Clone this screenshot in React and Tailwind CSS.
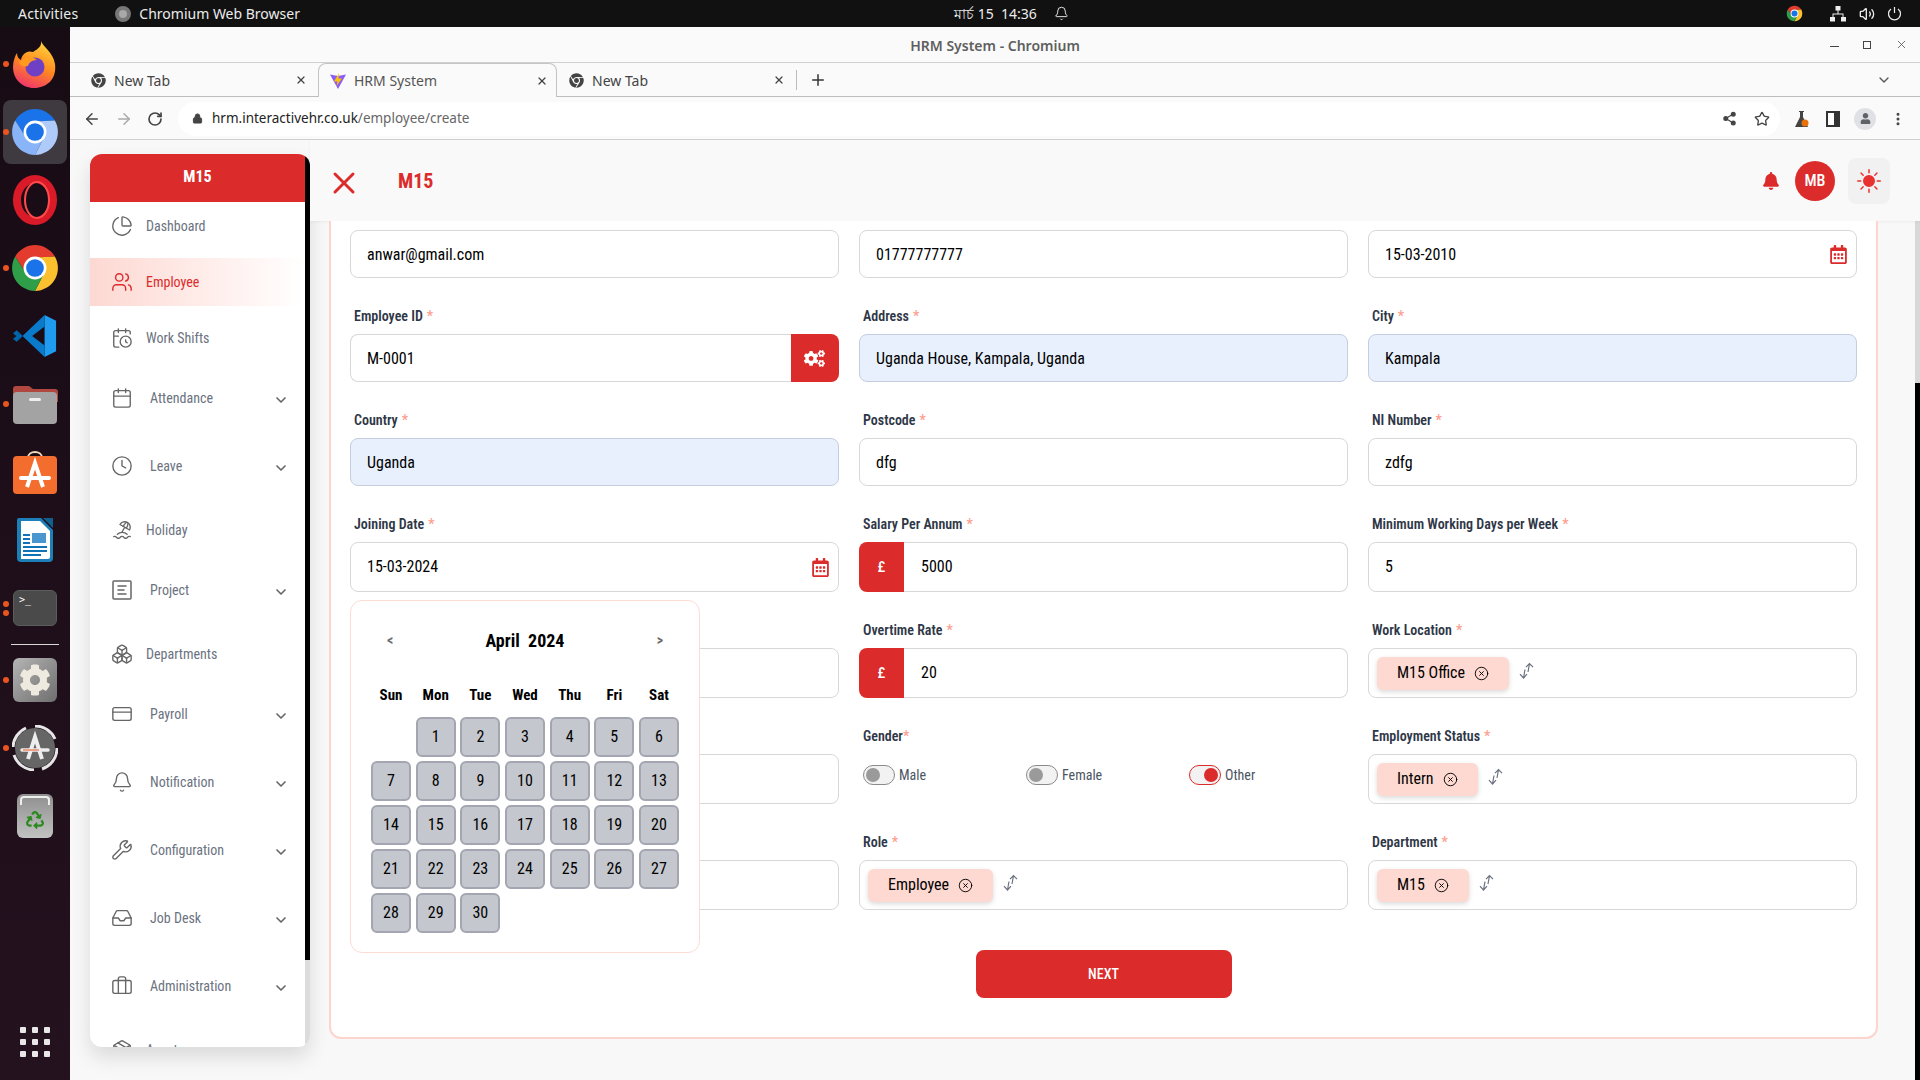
import {
  ArrowLeft, ArrowRight, Bell, Boxes, Briefcase, Calendar, CalendarClock, ChartPie, ChevronDown, CircleX,
  Clock, CreditCard, Inbox, Lock, MoreVertical, Package, Plus, RotateCw, Share2, Star, Users, Volume2, Wrench, X,
} from "lucide-react";
import { FaBell, FaChrome, FaCog, FaCogs, FaRecycle, FaRegCalendarAlt, FaUser } from "react-icons/fa";
import { BsSunFill } from "react-icons/bs";
import { TbBeach } from "react-icons/tb";

const chromeFont = "font-[family-name:'Noto_Sans',sans-serif]";

function ChromeMark({ size = 48, top, right, left, hub }) {
  return (
    <svg width={size} height={size} viewBox="0 0 48 48">
      <path d="M24 24L24 14L43.05 13A22 22 0 0 0 4.95 13L15.3 29Z" fill={top} />
      <path d="M24 24L32.7 29L24 46A22 22 0 0 0 43.05 13L24 14Z" fill={right} />
      <path d="M24 24L15.3 29L4.95 13A22 22 0 0 0 24 46L32.7 29Z" fill={left} />
      <circle cx="24" cy="24" r="11" fill="#fff" />
      <circle cx="24" cy="24" r="8.5" fill={hub} />
    </svg>
  );
}

function ProjectIcon() {
  return (
    <svg width="22" height="22" viewBox="0 0 22 22" fill="none" stroke="currentColor" strokeWidth="1.5" strokeLinecap="round">
      <rect x="2" y="2" width="18" height="18" rx="1" />
      <path d="M7 7h8M7 11h6M7 15h8" />
    </svg>
  );
}

function SortIcon() {
  return (
    <svg width="18" height="18" viewBox="0 0 18 18" fill="none" stroke="#6b7280" strokeWidth="1.2" className="ml-[10px] mb-[5px]">
      <path d="M7 5.200L10.500 1.500L14 5.200M10.500 1.500L9 10" />
      <path d="M1 12.200L4.500 16L8 12.200M4.500 16L6 7.500" />
    </svg>
  );
}

const dockIcons = [
  {
    dot: 1,
    icon: (
      <svg width="48" height="50" viewBox="0 0 48 50">
        <defs>
          <linearGradient id="ff" x1="0.7" y1="0" x2="0.3" y2="1">
            <stop offset="0" stopColor="#ffd53d" />
            <stop offset="0.5" stopColor="#ff8a1f" />
            <stop offset="1" stopColor="#f0336e" />
          </linearGradient>
        </defs>
        <path d="M30 2C32 8 42 13 44 25C46 40 36 49 23 49C11 49 2 40 2 28C2 22 4 17 6 14C6 18 8 20 10 21C11 15 16 11 22 13C27 10 31 7 30 2Z" fill="url(#ff)" />
        <circle cx="24" cy="28" r="9.5" fill="#6f3fc4" />
        <path d="M8 24C13 17 21 17 26 21C22 21 18 23 17 27C13 28 10 27 8 24Z" fill="#ff9a1f" />
      </svg>
    ),
  },
  { dot: 1, active: true, icon: <ChromeMark size={50} top="#1a73e8" right="#aecbfa" left="#8ab4f8" hub="#1a73e8" /> },
  {
    icon: (
      <svg width="46" height="50" viewBox="0 0 46 50">
        <ellipse cx="23" cy="25" rx="18" ry="21" fill="none" stroke="#d91a28" strokeWidth="8" />
        <ellipse cx="25" cy="25" rx="12" ry="18" fill="none" stroke="#ff4b4b" strokeWidth="2" />
      </svg>
    ),
  },
  { dot: 1, icon: <ChromeMark size={50} top="#e33b2e" right="#fbc02d" left="#2e9e49" hub="#1a73e8" /> },
  {
    icon: (
      <svg width="46" height="48" viewBox="0 0 48 48">
        <path d="M34 2L46 8V40L34 46Z" fill="#1f9cf0" />
        <path d="M34 2L11 24L34 46V34L21 24L34 14Z" fill="#0a7acb" />
        <path d="M11 24L5 18L1 21L8 27Z" fill="#0065a9" />
        <path d="M11 24L5 30L1 27L8 21Z" fill="#0065a9" />
      </svg>
    ),
  },
  {
    dot: 1,
    icon: (
      <svg width="46" height="42" viewBox="0 0 46 42">
        <path d="M1 6a3 3 0 0 1 3-3h13l4 3h22a3 3 0 0 1 3 3v10H1Z" fill="#b0483f" />
        <rect x="1" y="9" width="44" height="32" rx="4" fill="#a3a3a3" />
        <rect x="17" y="15" width="12" height="3" rx="1.5" fill="#eee" />
      </svg>
    ),
  },
  {
    icon: (
      <svg width="46" height="46" viewBox="0 0 46 46" fill="none">
        <path d="M16 9C16 1 30 1 30 9" stroke="#f3d9b8" strokeWidth="2" />
        <rect x="1" y="7" width="44" height="38" rx="4" fill="#f26d2e" />
        <path d="M15 38L23 14L31 38" stroke="#fff" strokeWidth="4" />
        <path d="M9 29H37" stroke="#fff" strokeWidth="4" strokeLinecap="round" />
      </svg>
    ),
  },
  {
    icon: (
      <svg width="38" height="46" viewBox="0 0 38 46">
        <path d="M3 1H25L37 13V41a4 4 0 0 1-4 4H5a4 4 0 0 1-4-4V3a2 2 0 0 1 2-2Z" fill="#1d7fb8" />
        <path d="M5 4H24L34 14V40a2 2 0 0 1-2 2H5Z" fill="#fff" />
        <path d="M27 1H37V11Z" fill="#115f8e" />
        <rect x="7" y="17" width="7" height="2" fill="#0f73b5" />
        <rect x="7" y="21" width="7" height="2" fill="#0f73b5" />
        <rect x="7" y="25" width="7" height="2" fill="#0f73b5" />
        <rect x="16" y="16" width="14" height="10" fill="#4a96cf" />
        <rect x="7" y="29" width="24" height="2" fill="#0f73b5" />
        <rect x="7" y="33" width="24" height="2" fill="#0f73b5" />
        <rect x="7" y="37" width="18" height="2" fill="#0f73b5" />
      </svg>
    ),
  },
  {
    dots: 2,
    icon: (
      <div className="w-[44px] h-[36px] rounded-md bg-[#4a4a4a] border border-[#5c5c5c] px-[5px] font-[family-name:'DejaVu_Sans_Mono',monospace] text-[10px] leading-[18px] text-white">
        {">_"}
      </div>
    ),
  },
  "sep",
  {
    dot: 1,
    icon: (
      <div className="w-[44px] h-[44px] rounded-md bg-gradient-to-br from-[#b5b5b5] to-[#6f6f6f] flex items-center justify-center">
        <FaCog size={32} className="text-[#efeadf]" />
      </div>
    ),
  },
  {
    dot: 1,
    icon: (
      <svg width="46" height="46" viewBox="0 0 46 46" fill="none">
        <circle cx="23" cy="23" r="20" fill="#666" />
        <path d="M23 1A22 22 0 0 1 43 14M45 23A22 22 0 0 1 30 44M22 45A22 22 0 0 1 2 30M1 22A22 22 0 0 1 14 3" stroke="#e6e6e6" strokeWidth="3" />
        <path d="M16 34L23 12L30 34" stroke="#eee" strokeWidth="4" />
        <path d="M10 25H36" stroke="#eee" strokeWidth="3.5" strokeLinecap="round" />
        <path d="M11 25H27" stroke="#e95420" strokeWidth="1" />
      </svg>
    ),
  },
  {
    icon: (
      <div className="w-[36px] h-[44px] rounded-md bg-gradient-to-b from-[#8f8f8f] to-[#c2c2c2] relative flex items-center justify-center pt-[8px]">
        <div className="absolute top-[2px] left-[3px] right-[3px] h-[9px] rounded-t-sm border-2 border-b-0 border-[#eeeeee]" />
        <FaRecycle size={18} className="text-[#2a8a1f]" />
      </div>
    ),
  },
];

function Dock() {
  return (
    <div className="w-[70px] shrink-0 bg-gradient-to-b from-[#170b14] to-[#24121f] flex flex-col pt-[3px]">
      {dockIcons.map((item, i) =>
        item === "sep" ? (
          <div key={i} className="h-1 flex items-center justify-center">
            <div className="w-12 h-px bg-[#d8d8d8]" />
          </div>
        ) : (
          <div key={i} className="h-[68px] relative flex items-center justify-center">
            {item.active && <div className="absolute left-[3px] right-[3px] top-[2px] bottom-[2px] rounded-lg bg-[#3f3a40]" />}
            {item.dot && <div className="absolute left-[3px] w-[6px] h-[6px] rounded-full bg-[#e95420]" />}
            {item.dots && (
              <div className="absolute left-[3px] flex flex-col gap-[3px]">
                <div className="w-[6px] h-[6px] rounded-full bg-[#e95420]" />
                <div className="w-[6px] h-[6px] rounded-full bg-[#e95420]" />
              </div>
            )}
            <div className="relative">{item.icon}</div>
          </div>
        )
      )}
      <div className="mt-auto mb-[23px] grid grid-cols-3 gap-[6px] w-[30px] mx-auto">
        {Array.from({ length: 9 }).map((_, i) => (
          <div key={i} className="w-[6px] h-[6px] rounded-[1px] bg-[#e8e8e8]" />
        ))}
      </div>
    </div>
  );
}

function TopBar() {
  return (
    <div className={`h-[27px] bg-[#111111] text-[#ececec] flex items-center text-[14px] ${chromeFont}`}>
      <div className="w-[954px] flex items-center pl-[18px]">
        <span className="tracking-[0.2px]">Activities</span>
        <span className="ml-[37px] mr-[8px] w-4 h-4 rounded-full bg-[#a8a8a8] border-[4px] border-[#777] block" />
        <span>Chromium Web Browser</span>
      </div>
      <span className="whitespace-pre">মার্চ 15  14:36</span>
      <Bell size={15} strokeWidth={1.5} className="ml-[17px]" />
      <div className="flex-1 flex items-center justify-end pr-[18px]">
        <ChromeMark size={17} top="#e33b2e" right="#fbc02d" left="#2e9e49" hub="#1a73e8" />
        <svg width="16" height="16" viewBox="0 0 16 16" className="ml-[27px]" fill="#eee">
          <rect x="5.5" y="0" width="5" height="4.5" />
          <rect x="0" y="11" width="5" height="4.5" />
          <rect x="11" y="11" width="5" height="4.5" />
          <path d="M7.500 4h1v3.500h5V11h-1V8.500h-9V11h-1V7.500h5Z" />
        </svg>
        <Volume2 size={16} className="ml-[13px]" />
        <svg width="15" height="15" viewBox="0 0 15 15" className="ml-[12px]" fill="none" stroke="#eee" strokeWidth="1.2">
          <path d="M7.500 1v6M4 3a6 6 0 1 0 7 0" />
        </svg>
      </div>
    </div>
  );
}

function Tab({ title, active, icon }) {
  return (
    <div
      className={`h-[34px] flex items-center text-[14px] shrink-0 pt-px ${
        active
          ? "w-[239px] border border-b-0 border-[#c4c4c4] rounded-t-lg bg-[#fafafa] text-[#555] pl-[11px] pr-[8px]"
          : "w-[248px] text-[#444] pl-[21px] pr-[11px]"
      }`}
    >
      {icon}
      <span className="ml-[8px]">{title}</span>
      <X size={12} strokeWidth={2.5} className="ml-auto text-[#444]" />
    </div>
  );
}

function ViteIcon() {
  return (
    <svg width="16" height="16" viewBox="0 0 16 16">
      <path d="M0 1.500L8 3L16 1.500L8 16Z" fill="#8b5cf6" />
      <path d="M9 0L4 8.500H7.500L6.500 13L12 5.500H8.500Z" fill="#ffc400" />
    </svg>
  );
}

function BrowserChrome() {
  return (
    <div className={chromeFont}>
      <div className="h-[36px] bg-[#fafafa] border-b border-[#d0d0d0] flex items-center justify-center relative">
        <span className="text-[14px] font-semibold text-[#5f5f5f] pt-[2px]">HRM System - Chromium</span>
        <div className="absolute right-[12px] top-0 h-full flex items-center gap-[24px] text-[#555]">
          <div className="w-[9px] h-px bg-[#444] mt-[4px]" />
          <div className="w-[8px] h-[8px] border border-[#444]" />
          <X size={13} strokeWidth={1.5} />
        </div>
      </div>
      <div className="h-[34px] bg-[#fafafa] border-b border-[#bdbdbd] flex items-center">
        <Tab title="New Tab" icon={<FaChrome size={15} className="text-[#444]" />} />
        <Tab active title="HRM System" icon={<ViteIcon />} />
        <div className="-ml-[9px]">
          <Tab title="New Tab" icon={<FaChrome size={15} className="text-[#444]" />} />
        </div>
        <div className="w-px h-5 bg-[#bbb]" />
        <Plus size={18} strokeWidth={2} className="ml-3 text-[#333]" />
        <ChevronDown size={16} className="ml-auto mr-[28px] text-[#555]" />
      </div>
      <div className="h-[43px] bg-[#fafafa] border-b border-[#d0d0d0] flex items-center pt-px">
        <div className="w-[108px] shrink-0 flex items-center pl-[13px] gap-[14px] text-[#444]">
          <ArrowLeft size={18} />
          <ArrowRight size={18} className="text-[#aaa]" />
          <RotateCw size={16} strokeWidth={2.500} />
        </div>
        <div className="w-[1602px] h-[34px] rounded-full bg-white flex items-center pl-[14px] pr-[10px] text-[13.500px]">
          <Lock size={11} fill="#444" className="text-[#444]" />
          <span className="ml-[9px] text-[#222]">
            hrm.interactivehr.co.uk<span className="text-[#666]">/employee/create</span>
          </span>
          <Share2 size={15} fill="#444" className="ml-auto text-[#444]" />
          <Star size={16} className="ml-[17px] text-[#444]" />
        </div>
        <div className="ml-[5px] flex items-center text-[#444]">
          <div className="w-8 flex justify-center relative">
            <svg width="15" height="16" viewBox="0 0 15 16" fill="#444">
              <path d="M5 0h5v1H9v5l5 10H1L6 6V1H5Z" />
              <circle cx="11" cy="12" r="3.500" fill="#e8710a" />
            </svg>
          </div>
          <div className="w-8 flex justify-center">
            <div className="w-[14px] h-[16px] border-[2px] border-r-[6px] border-[#333] bg-white" />
          </div>
          <div className="w-8 flex justify-center">
            <div className="w-[22px] h-[22px] rounded-full bg-[#dfe1e5] flex items-center justify-center">
              <FaUser size={11} className="text-[#5f6368]" />
            </div>
          </div>
          <div className="w-8 flex justify-center pl-[2px]">
            <MoreVertical size={16} strokeWidth={2.500} />
          </div>
        </div>
      </div>
    </div>
  );
}

const menu = [
  { label: "Dashboard", Icon: ChartPie },
  { label: "Employee", Icon: Users, active: true },
  { label: "Work Shifts", Icon: CalendarClock },
  { label: "Attendance", Icon: Calendar, sub: true },
  { label: "Leave", Icon: Clock, sub: true },
  { label: "Holiday", Icon: TbBeach },
  { label: "Project", Icon: ProjectIcon, sub: true },
  { label: "Departments", Icon: Boxes },
  { label: "Payroll", Icon: CreditCard, sub: true },
  { label: "Notification", Icon: Bell, sub: true },
  { label: "Configuration", Icon: Wrench, sub: true },
  { label: "Job Desk", Icon: Inbox, sub: true },
  { label: "Administration", Icon: Briefcase, sub: true },
  { label: "Assets", Icon: Package },
];

function Sidebar() {
  return (
    <div className="ml-5 mt-[14px] w-[220px] h-[893px] shrink-0 relative rounded-t-xl rounded-b-xl overflow-hidden bg-white shadow-[0_10px_20px_rgba(0,0,0,0.12)]">
      <div className="h-[48px] bg-[#dc2b2b] text-white font-bold text-[16px] flex items-center justify-center pb-[2px] pr-[5px]">M15</div>
      <div className="flex flex-col gap-2 pr-[5px]">
        {menu.map(({ label, Icon, sub, active }) => (
          <div
            key={label}
            className={`flex items-center pl-[21px] pr-[16px] text-[14px] ${sub ? "h-[60px] pb-1" : "h-[48px]"} ${
              active ? "bg-gradient-to-r from-[#fdd8d2] to-white text-[#dc2b2b]" : "text-[#6b7280]"
            }`}
          >
            <span className={active ? "text-[#dc2b2b]" : "text-[#666]"}>
              <Icon size={22} strokeWidth={1.5} />
            </span>
            <span className={sub ? "ml-[17px]" : "ml-[13px]"}>{label}</span>
            {sub && <ChevronDown size={16} strokeWidth={2.500} className="ml-auto mt-1 text-[#666]" />}
          </div>
        ))}
      </div>
      <div className="absolute right-0 top-0 bottom-0 w-[5px] bg-[#dcdcdc]">
        <div className="h-[806px] bg-black" />
      </div>
    </div>
  );
}

function Header() {
  return (
    <div className="h-[81px] shrink-0 bg-[#f9f9f9] shadow-[0_1px_3px_rgba(0,0,0,0.05)] relative flex items-center pl-[16px] pr-[30px]">
      <X size={36} strokeWidth={2} className="text-[#dc2b2b] mt-[4px]" />
      <span className="ml-[36px] text-[20px] font-bold text-[#dc2b2b]">M15</span>
      <FaBell size={18} className="ml-auto text-[#dc2b2b]" />
      <div className="ml-[15px] w-10 h-10 rounded-full bg-[#dc2b2b] text-white text-[16px] font-medium flex items-center justify-center">MB</div>
      <div className="ml-[13px] w-[42px] h-[46px] rounded-lg bg-[#f1f1f1] flex items-center justify-center">
        <BsSunFill size={24} className="text-[#e8322f]" />
      </div>
    </div>
  );
}

function Label({ text, tight }) {
  return (
    <div className="h-5 mb-[9px] pl-1 text-[14px] leading-[22px] font-semibold text-[#2f3747]">
      {text && (
        <>
          {text}
          <span className={`text-[#fca193] ${tight ? "" : "ml-1"}`}>*</span>
        </>
      )}
    </div>
  );
}

function Box({ value, fill, tall, children }) {
  return (
    <div
      className={`${tall ? "h-[50px]" : "h-[48px] pt-px"} rounded-lg border-[1.5px] flex items-center text-[16px] text-black overflow-hidden ${
        fill ? "bg-[#e8f0fe] border-[#c4cede]" : "bg-white border-[#d8d8d8]"
      }`}
    >
      {value !== undefined && <span className="pl-4">{value}</span>}
      {children}
    </div>
  );
}

function Field({ label, value, fill, tall, date }) {
  return (
    <div>
      {label !== undefined && <Label text={label} />}
      <Box value={value} fill={fill} tall={tall}>
        {date && <FaRegCalendarAlt size={19} className="ml-auto mr-[8px] text-[#dc2b2b]" />}
      </Box>
    </div>
  );
}

function EmployeeId() {
  return (
    <div>
      <Label text="Employee ID" />
      <div className="h-[48px] flex text-[16px] text-black">
        <div className="flex-1 rounded-l-lg border-[1.5px] border-r-0 border-[#d8d8d8] flex items-center pl-4 pt-px">M-0001</div>
        <div className="w-[48px] rounded-r-lg bg-[#dc2b2b] flex items-center justify-center pr-[2px]">
          <FaCogs size={21} className="text-white" />
        </div>
      </div>
    </div>
  );
}

function Money({ label, value }) {
  return (
    <div>
      <Label text={label} />
      <div className="h-[50px] flex text-[16px] text-black">
        <div className="w-[45px] rounded-l-lg bg-[#dc2b2b] text-white flex items-center justify-center text-[15px] font-medium">£</div>
        <div className="flex-1 rounded-r-lg border-[1.5px] border-l-0 border-[#d8d8d8] flex items-center pl-[17px]">{value}</div>
      </div>
    </div>
  );
}

function Chip({ label, text }) {
  return (
    <div>
      <Label text={label} />
      <Box tall>
        <div className="ml-2 h-[33px] px-5 rounded-md bg-[#fed9d1] shadow-[0_2px_5px_rgba(0,0,0,0.15)] flex items-center">
          <span className="whitespace-nowrap">{text}</span>
          <CircleX size={15} strokeWidth={1.5} className="ml-[9px]" />
        </div>
        <SortIcon />
      </Box>
    </div>
  );
}

function Toggle({ text, on }) {
  return (
    <div className="flex items-center text-[14px] text-[#4b5563]">
      <div className={`w-[32px] h-[20px] rounded-full border bg-[#f2f2f2] flex items-center px-[2px] ${on ? "border-[#dc2b2b] justify-end" : "border-[#8a8a8a]"}`}>
        <div className={`w-[14px] h-[14px] rounded-full ${on ? "bg-[#dc2b2b]" : "bg-[#9a9a9a]"}`} />
      </div>
      <span className="ml-1">{text}</span>
    </div>
  );
}

const weekDays = ["Sun", "Mon", "Tue", "Wed", "Thu", "Fri", "Sat"];

function CalendarPopup() {
  return (
    <div className="absolute left-[40px] top-[379px] w-[350px] h-[353px] rounded-xl border border-[#fddcd5] bg-white pl-[20px] pt-[26px]">
      <div className="w-[308px] flex items-center justify-between px-[16px] text-[#6b6b6b]">
        <span className="text-[14px] font-bold">{"<"}</span>
        <span className="text-[18px] font-bold text-black whitespace-pre">April  2024</span>
        <span className="text-[14px] font-bold">{">"}</span>
      </div>
      <div className="w-[308px] mt-[30px] grid grid-cols-7 gap-x-[4.670px] text-center">
        {weekDays.map((d) => (
          <div key={d} className="text-[15px] font-bold text-black">{d}</div>
        ))}
      </div>
      <div className="w-[308px] mt-[10px] grid grid-cols-7 gap-x-[4.670px] gap-y-1">
        <div />
        {Array.from({ length: 30 }).map((_, i) => (
          <div key={i} className="h-10 rounded-md border-2 border-[#a3a6b0] bg-[#c4c7cd] flex items-center justify-center text-[16px] text-black">
            {i + 1}
          </div>
        ))}
      </div>
    </div>
  );
}

function Form() {
  return (
    <div className="relative flex-1 min-w-0 pl-[19px] pr-[37px]">
      <div className="bg-white border-x-2 border-b-2 border-[#fdd5cc] rounded-b-xl px-[19px] pt-[9px] pb-[39px]">
        <div className="grid grid-cols-3 gap-x-5 gap-y-[27px]">
          <Field value="anwar@gmail.com" />
          <Field value="01777777777" />
          <Field value="15-03-2010" date />

          <EmployeeId />
          <Field label="Address" value="Uganda House, Kampala, Uganda" fill />
          <Field label="City" value="Kampala" fill />

          <Field label="Country" value="Uganda" fill />
          <Field label="Postcode" value="dfg" />
          <Field label="NI Number" value="zdfg" />

          <Field label="Joining Date" value="15-03-2024" date tall />
          <Money label="Salary Per Annum" value="5000" />
          <Field label="Minimum Working Days per Week" value="5" tall />

          <Field label="" tall />
          <Money label="Overtime Rate" value="20" />
          <Chip label="Work Location" text="M15 Office" />

          <Field label="" tall />
          <div>
            <Label text="Gender" tight />
            <div className="h-[50px] grid grid-cols-[163px_163px_1fr] pl-1 pb-2 items-center">
              <Toggle text="Male" />
              <Toggle text="Female" />
              <Toggle text="Other" on />
            </div>
          </div>
          <Chip label="Employment Status" text="Intern" />

          <Field label="" tall />
          <Chip label="Role" text="Employee" />
          <Chip label="Department" text="M15" />
        </div>
        <div className="mt-10 flex justify-center">
          <div className="w-[256px] h-12 rounded-lg bg-[#dc2b2b] text-white text-[14px] font-medium flex items-center justify-center">NEXT</div>
        </div>
      </div>
      <CalendarPopup />
    </div>
  );
}

export default function App() {
  return (
    <div className="w-[1920px] h-[1080px] overflow-hidden flex flex-col">
      <TopBar />
      <div className="flex flex-1 min-h-0">
        <Dock />
        <div className="flex-1 min-w-0 flex flex-col">
          <BrowserChrome />
          <div className="flex-1 min-h-0 flex bg-[#f8f8f8] font-[family-name:Roboto,sans-serif] [font-stretch:75%]">
            <Sidebar />
            <div className="flex-1 min-w-0 flex flex-col">
              <Header />
              <div className="flex-1 min-h-0 flex">
                <Form />
                <div className="w-[5px] shrink-0 bg-[#d8d8d8] pt-[162px]">
                  <div className="h-full bg-black" />
                </div>
              </div>
            </div>
          </div>
        </div>
      </div>
    </div>
  );
}
